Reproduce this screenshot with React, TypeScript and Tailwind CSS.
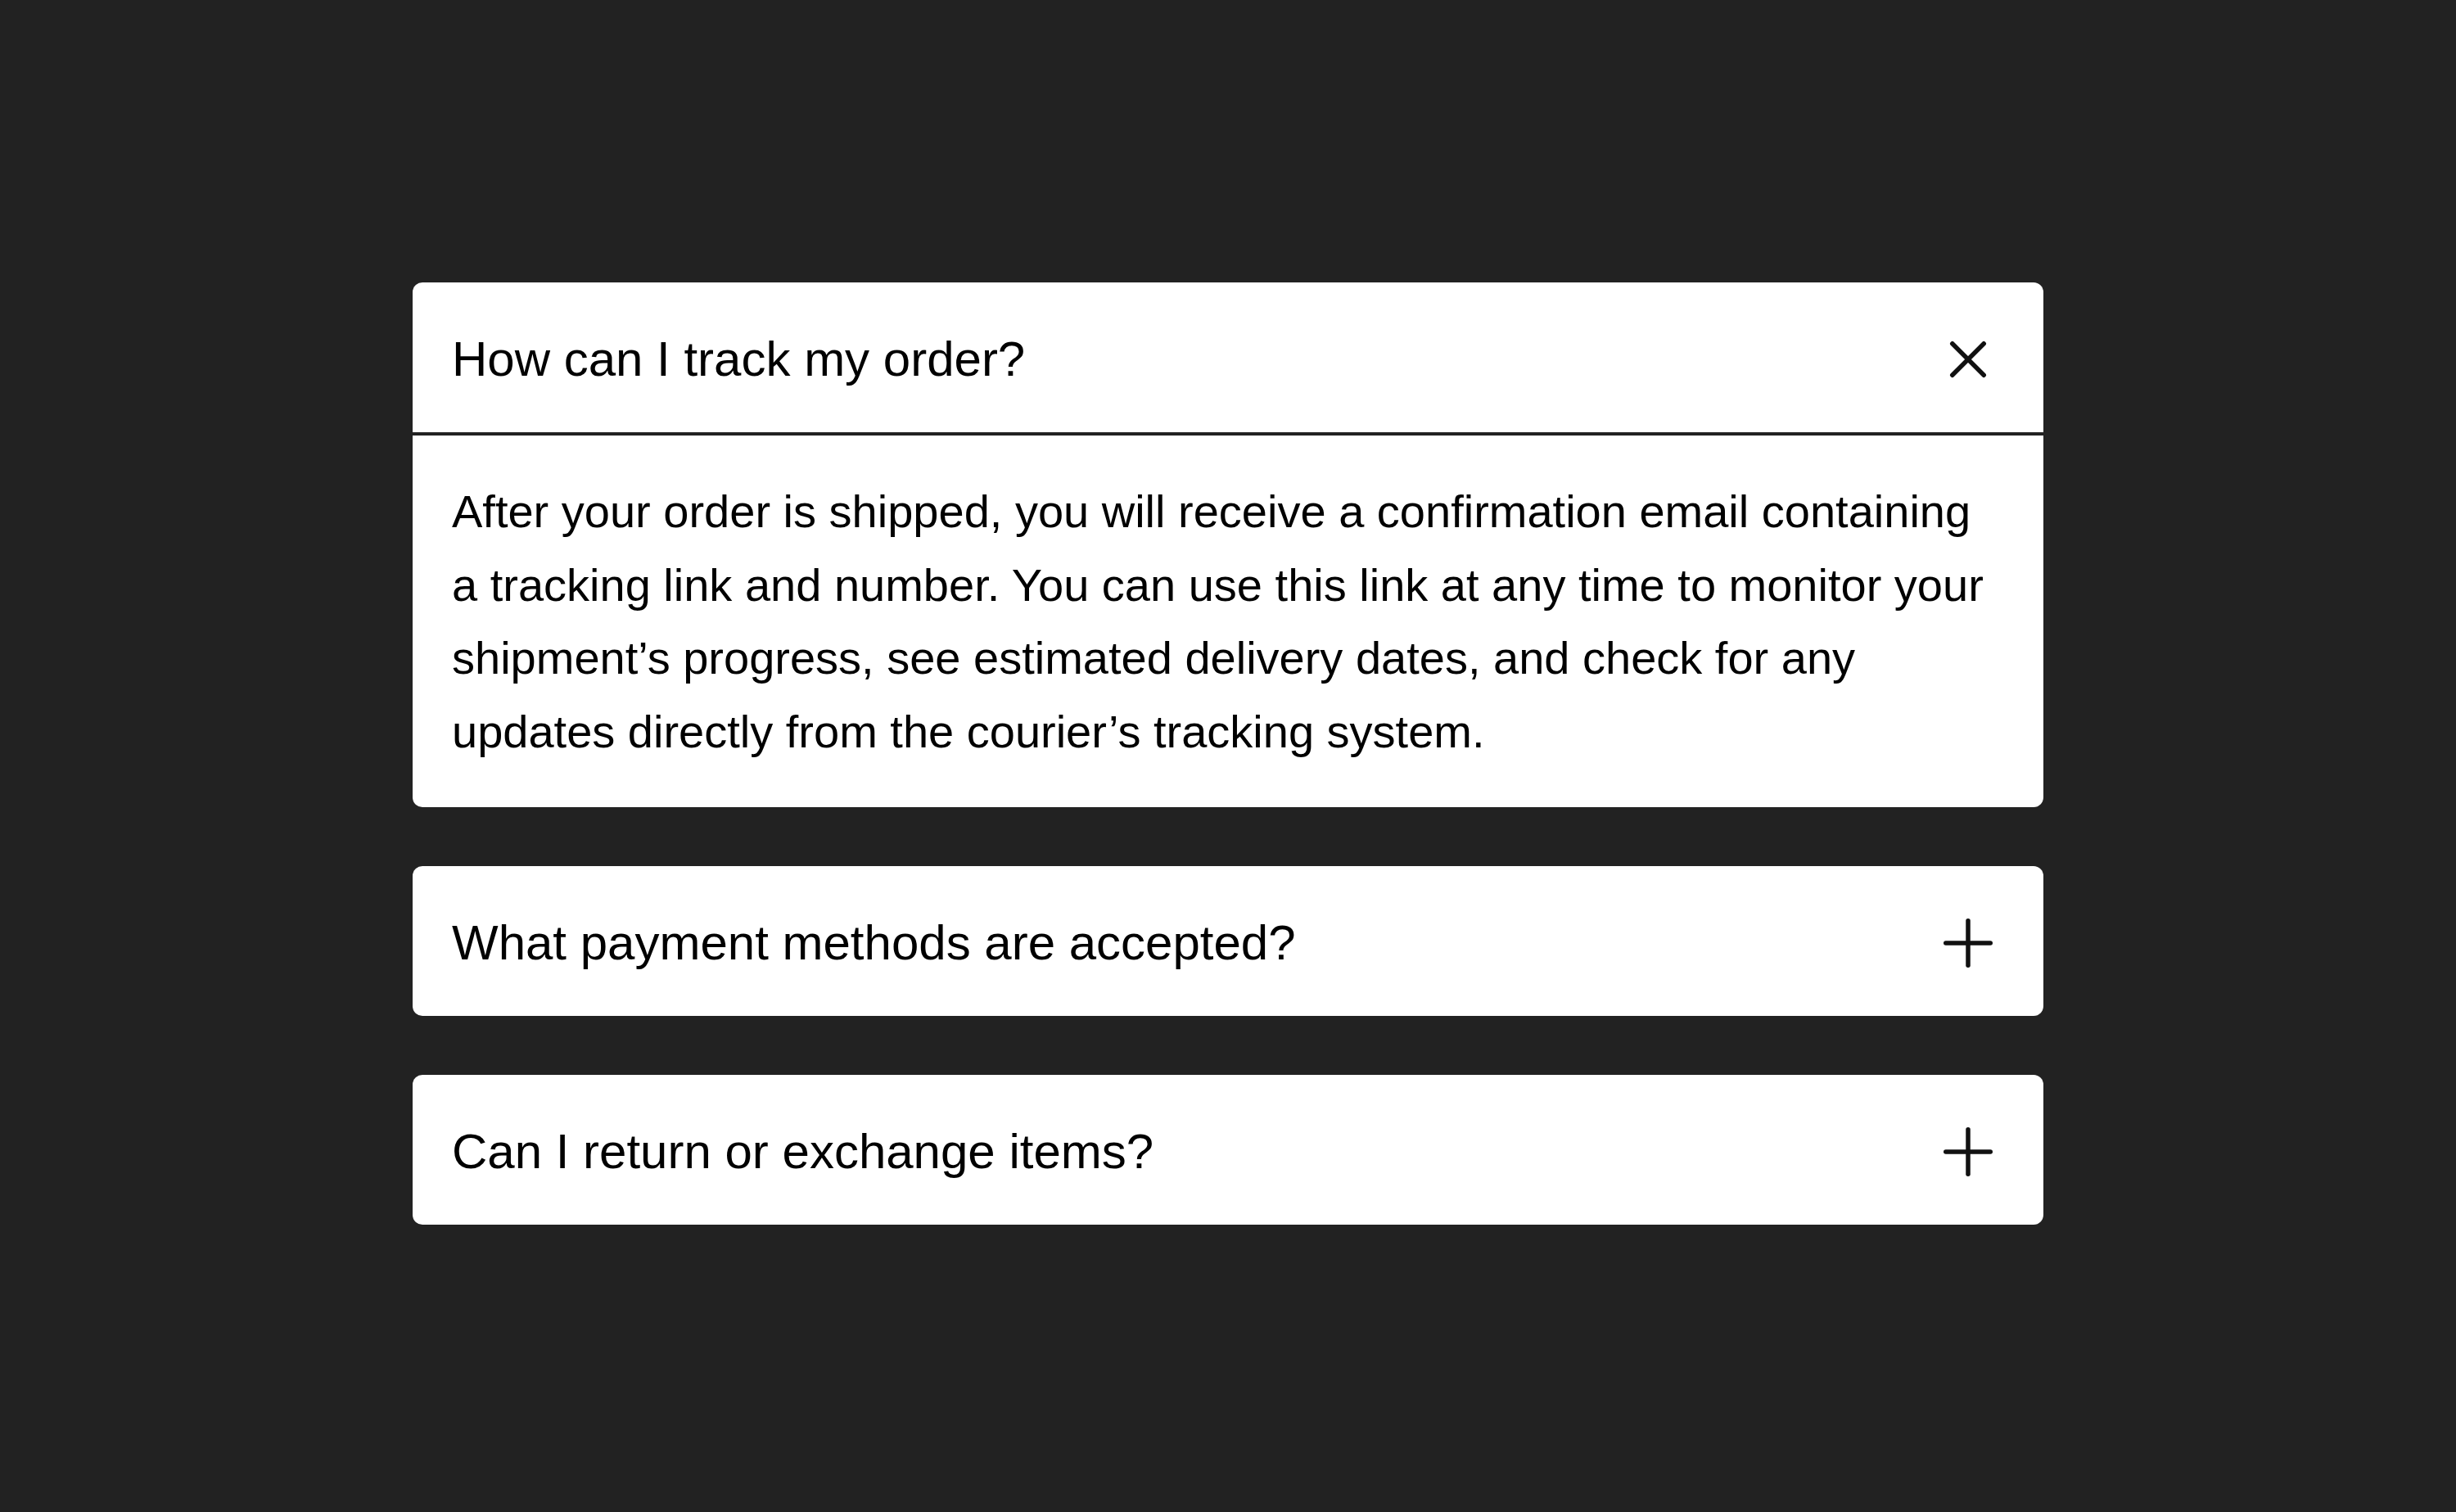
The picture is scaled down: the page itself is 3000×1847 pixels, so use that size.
import { useState } from 'react';

const FAQS = [
  {
    q: 'How can I track my order?',
    a: 'After your order is shipped, you will receive a confirmation email containing a tracking link and number. You can use this link at any time to monitor your shipment’s progress, see estimated delivery dates, and check for any updates directly from the courier’s tracking system.',
  },
  {
    q: 'What payment methods are accepted?',
    a: 'We accept all major credit and debit cards, PayPal, Apple Pay and Google Pay.',
  },
  {
    q: 'Can I return or exchange items?',
    a: 'Yes. Items can be returned or exchanged within 30 days of delivery, as long as they are unused and in their original packaging.',
  },
];

function ToggleIcon({ open }: { open: boolean }) {
  // plus that turns into an X when the item is open
  return (
    <svg
      width="60"
      height="60"
      viewBox="0 0 60 60"
      className={open ? 'shrink-0 rotate-45' : 'shrink-0'}
      fill="none"
      stroke="#111111"
      strokeWidth="5.5"
      strokeLinecap="round"
    >
      <path d="M30 2.75V57.25" />
      <path d="M2.75 30H57.25" />
    </svg>
  );
}

export default function App() {
  const [openIndex, setOpenIndex] = useState<number | null>(0);

  return (
    <div className="min-h-screen bg-[#222222] pt-[345px] font-['Liberation_Sans',Arial,sans-serif]">
      <div className="mx-auto flex w-[1992px] flex-col gap-[72px]">
        {FAQS.map((item, i) => {
          const open = openIndex === i;
          return (
            <div key={item.q} className="overflow-hidden rounded-[12px] bg-white">
              <button
                type="button"
                onClick={() => setOpenIndex(open ? null : i)}
                className="flex w-full items-center justify-between pt-[49px] pb-[44px] pl-[48px] pr-[62px] text-left"
              >
                <span className="text-[60px] leading-[90px] text-black">{item.q}</span>
                <ToggleIcon open={open} />
              </button>
              {open && (
                <div className="border-t-[4px] border-[#222222] px-[48px] py-[48px]">
                  <p className="text-[56px] leading-[1.6] text-black">{item.a}</p>
                </div>
              )}
            </div>
          );
        })}
      </div>
    </div>
  );
}
